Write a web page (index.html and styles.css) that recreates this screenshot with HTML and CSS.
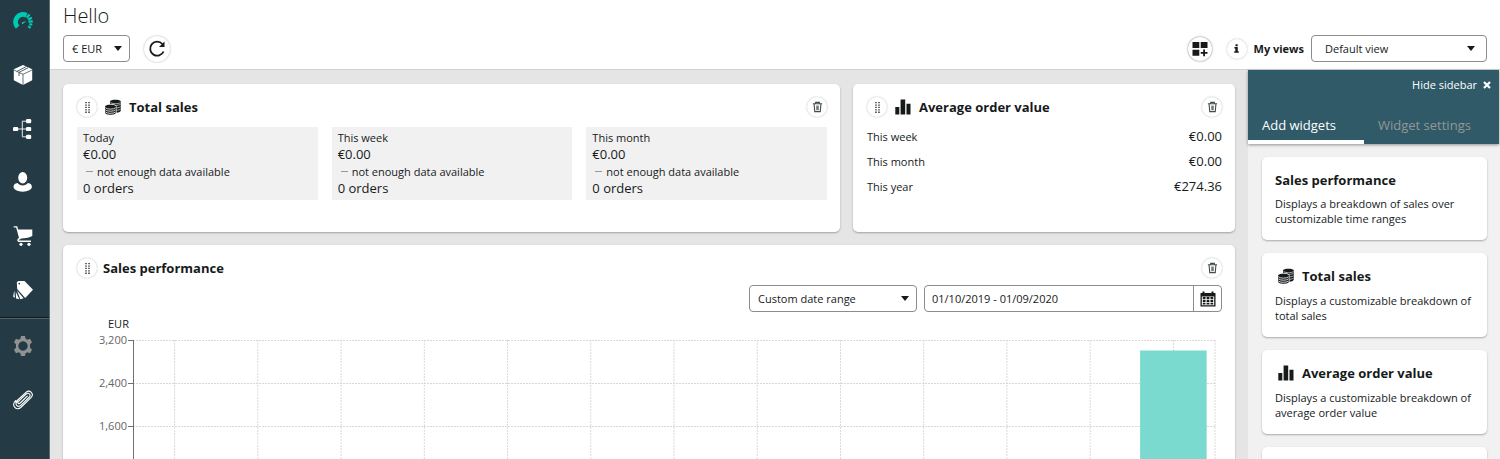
FILE: index.html
```html
<!DOCTYPE html>
<html lang="en">
<head>
<meta charset="utf-8">
<title>Dashboard</title>
<meta name="viewport" content="width=device-width, initial-scale=1">
<link rel="stylesheet" href="styles.css">
</head>
<body>
<svg class="symbols" aria-hidden="true">
  <symbol id="coins" viewBox="0 0 16 16">
    <path d="M5 2.600C5 0 15.800 0 15.800 2.600V11.500c0 1.200-1.800 2-4.300 2.200V7C10 5.200 7.500 5 5 5z"/>
    <path d="M5.500 3.600c2.500 1.500 7.800 1.500 10.200 0M10 6.500c2.500-.1 4.800-.6 5.700-1.300M11.500 8.900c2-.1 3.600-.6 4.200-1.300M11.500 11.300c2-.1 3.600-.6 4.200-1.300" fill="none" stroke="#fff" stroke-width=".6"/>
    <path d="M0 7.700C0 4.700 11 4.700 11 7.700V13.500c0 3-11 3-11 0z"/>
    <path d="M.2 8.700c2 1.900 8.600 1.900 10.600 0M.2 10.800c2 1.900 8.600 1.900 10.600 0M.2 12.900c2 1.900 8.600 1.900 10.600 0" fill="none" stroke="#fff" stroke-width=".8"/>
    <path d="M.3 6.700C2.500 4.600 8.500 4.600 10.700 6.600" fill="none" stroke="#fff" stroke-width=".5"/>
  </symbol>
  <symbol id="bars" viewBox="0 0 16 16"><path d="M.3 8h4v7.500h-4zM5.600.5h4.600v15H5.600zM11.500 4.800h4v10.700h-4z"/></symbol>
  <symbol id="trash" viewBox="0 0 12 12">
    <path d="M1 2.500h10M4 2V1h4v1M2.300 3l.7 8h6l.7-8" fill="none" stroke="currentColor" stroke-width="1.200"/>
    <path d="M4.600 4.500h2.800v5H4.600z" opacity=".75"/>
  </symbol>
  <symbol id="grip" viewBox="0 0 5 11">
    <path d="M1 0v11M4 0v11" fill="none" stroke="currentColor" stroke-width="1.300" stroke-dasharray="1.300 1.100"/>
  </symbol>
</svg>
<div class="app">
  <nav class="rail" aria-label="Main">
    <div class="rail-main">
      <a href="#" aria-label="Dashboard" class="active"><svg viewBox="0 0 20 20">
        <path d="M4.700 16.200A7.500 7.500 0 0 1 13.500 4.300" fill="none" stroke="currentColor" stroke-width="4.800"/>
        <path d="M13.700 6.800l2.900-3.200M15 8.600l3.900-1.800M15.500 10.600l4.300-.2M16.400 13l2.900.8M15.300 15.200l2.300 1.800" fill="none" stroke="currentColor" stroke-width="2.200"/>
        <path d="M9 11.200l4.500-1.200-3.600 2.900a1 1 0 0 1-.9-1.700z"/>
      </svg></a>
      <a href="#" aria-label="Products"><svg viewBox="0 0 20 20">
        <path d="M10 0l9.200 4.200v11L10 20l-9.200-4.800v-11z"/>
        <path d="M.5 4.800L10 9.300l9.500-4.500M10 9.300V20" fill="none" stroke="#243b45" stroke-width=".7"/>
        <path d="M3.800 6.500l9.500-5M6 7.600V11M6 7.400l9-4.600" fill="none" stroke="#243b45" stroke-width=".8"/>
      </svg></a>
      <a href="#" aria-label="Categories"><svg viewBox="0 0 20 20">
        <path d="M2 10h12M13 2.200H9.300v15.600H14" fill="none" stroke="currentColor" stroke-width=".9"/>
        <rect x="0" y="7.900" width="5.200" height="4.200" rx="1.200"/><rect x="13" y="0" width="5.200" height="4.200" rx="1.200"/><rect x="13" y="7.900" width="5.200" height="4.200" rx="1.200"/><rect x="13" y="15.800" width="5.200" height="4.200" rx="1.200"/>
      </svg></a>
      <a href="#" aria-label="Customers"><svg viewBox="0 0 20 20">
        <ellipse cx="9.700" cy="5.700" rx="4.500" ry="5.700"/>
        <path d="M4.500 11C6.800 14.300 12.600 14.300 14.900 11c2.800.5 4 1.800 4 3.800 0 2.800-4.200 4.900-9.200 4.900S.5 17.600.5 14.800c0-2 1.200-3.300 4-3.800z"/>
      </svg></a>
      <a href="#" aria-label="Orders"><svg viewBox="0 0 20 20">
        <path d="M.7.900h3l3.200 11.600c-2.500.6-2.500 2.800-.5 2.800H18" fill="none" stroke="currentColor" stroke-width="1.400"/>
        <path d="M4.600 3.500h14.700v6.200c-1.200 1.700-7 2.500-12.400 2.900z"/>
        <circle cx="8" cy="18.300" r="1.600"/><circle cx="16" cy="18.300" r="1.600"/>
      </svg></a>
      <a href="#" aria-label="Marketing"><svg viewBox="0 0 20 20">
        <path fill-rule="evenodd" d="M3.800 2.300L5.300 1H11.500L20 9.800 12.200 18 4.200 9zM6.200 2.700a.8.800 0 1 0 .1 0z"/>
        <path d="M4 10.500l6.600 7.700-3.300 1zM2.800 11.800l3.500 7.500-3.300-.8zM1.300 10.500l.6 7.500L.1 16.500z"/>
      </svg></a>
    </div>
    <div class="rail-extra">
      <a href="#" aria-label="Settings" class="muted"><svg viewBox="0 0 20 20">
        <path fill-rule="evenodd" d="M8 0h4l.6 2.800 1.700 1 2.700-1 2 3.500L17 8.200v3.600l2 1.900-2 3.500-2.700-1-1.700 1L12 20H8l-.6-2.800-1.700-1-2.700 1-2-3.500 2-1.900V8.200L1 6.300l2-3.500 2.700 1 1.700-1zM10 5.300a4.700 4.700 0 1 0 .01 0z"/>
      </svg></a>
      <a href="#" aria-label="Attachments"><svg viewBox="0 0 20 20">
        <path d="M14.300 6.200L7.200 13c-1.500 1.500-3.300-.3-1.800-1.700L13.200 4c2.200-2 5.300.8 3.200 3L8.100 15.200c-3.100 3-7-.8-4-3.800M2.600 10.600C-2 15 3 21.500 7.800 17.500L18 7.700c3.600-3.800-1.200-8.700-5-5.400L2.600 12" fill="none" stroke="currentColor" stroke-width="1.100" stroke-linecap="round"/>
      </svg></a>
    </div>
  </nav>

  <div class="page">
    <header class="top">
      <h1>Hello</h1>
      <div class="toolbar">
        <span class="select currency"><select aria-label="Currency"><option>€ EUR</option></select></span>
        <button class="round refresh" aria-label="Refresh"><svg viewBox="0 0 18 18"><path d="M14.400 4A7 7 0 1 0 15.600 11.500" fill="none" stroke="currentColor" stroke-width="1.800"/><path d="M16.500 1.500v5.500h-5.500z"/></svg></button>
        <div class="views">
          <button class="round grid-button" aria-label="Edit widgets"><svg viewBox="0 0 16 16"><path d="M.5 1h6.800v6H.5zM8.700 1h6.800v6H8.700zM.5 8.700h6.800v6H.5zM11.200 8.500h1.800v2.400h2.500v1.800H13v2.500h-1.800v-2.500H8.700v-1.800h2.500z"/></svg></button>
          <button class="round info" aria-label="Information"><svg viewBox="0 0 6 10"><path d="M1.800 0h2.600v2.200H1.800zM.5 3.300h4v5h1.200V10H.3V8.300h1.300V5H.5z"/></svg></button>
          <label for="view">My views</label>
          <span class="select view"><select id="view"><option>Default view</option></select></span>
        </div>
      </div>
    </header>

    <div class="body">
      <main class="board">
        <section class="card total">
          <div class="card-head">
            <button class="round small" aria-label="Move"><svg class="grip"><use href="#grip"/></svg></button>
            <svg class="icon"><use href="#coins"/></svg>
            <h2>Total sales</h2>
            <button class="round small remove" aria-label="Delete"><svg class="trash"><use href="#trash"/></svg></button>
          </div>
          <div class="tiles">
            <div class="tile"><span>Today</span><strong>€0.00</strong><span class="note">not enough data available</span><strong>0 orders</strong></div>
            <div class="tile"><span>This week</span><strong>€0.00</strong><span class="note">not enough data available</span><strong>0 orders</strong></div>
            <div class="tile"><span>This month</span><strong>€0.00</strong><span class="note">not enough data available</span><strong>0 orders</strong></div>
          </div>
        </section>

        <section class="card average">
          <div class="card-head">
            <button class="round small" aria-label="Move"><svg class="grip"><use href="#grip"/></svg></button>
            <svg class="icon"><use href="#bars"/></svg>
            <h2>Average order value</h2>
            <button class="round small remove" aria-label="Delete"><svg class="trash"><use href="#trash"/></svg></button>
          </div>
          <dl class="values">
            <div><dt>This week</dt><dd>€0.00</dd></div>
            <div><dt>This month</dt><dd>€0.00</dd></div>
            <div><dt>This year</dt><dd>€274.36</dd></div>
          </dl>
        </section>

        <section class="card performance">
          <div class="card-head">
            <button class="round small" aria-label="Move"><svg class="grip"><use href="#grip"/></svg></button>
            <h2>Sales performance</h2>
            <button class="round small remove" aria-label="Delete"><svg class="trash"><use href="#trash"/></svg></button>
          </div>
          <div class="filters">
            <span class="select range"><select aria-label="Date range type"><option>Custom date range</option></select></span>
            <div class="date">
              <input type="text" aria-label="Date range" value="01/10/2019 - 01/09/2020">
              <button aria-label="Open calendar"><svg viewBox="0 0 16 16"><path fill-rule="evenodd" d="M.5 2h2V.5h2V2h7V.5h2V2h2v13.500H.5zM1.800 5.500v8.800h12.400V5.500z"/><path d="M2.800 6h2.700v2.200H2.800zM6.600 6h2.800v2.200H6.600zM10.500 6h2.700v2.200h-2.700zM2.800 9h2.700v2H2.800zM6.600 9h2.800v2H6.600zM10.500 9h2.700v2h-2.700zM2.800 11.800h2.700v1.800H2.800zM6.600 11.800h2.800v1.800H6.600zM10.500 11.800h2.700v1.800h-2.700z"/></svg></button>
            </div>
          </div>
          <div class="chart">
            <div class="unit">EUR</div>
            <div class="scale"><span>3,200</span><span>2,400</span><span>1,600</span></div>
            <svg class="plot" role="img" aria-label="Sales by month">
              <g class="rows">
                <line x1="0" x2="100%" y1="0.500" y2="0.500"/><line x1="0" x2="100%" y1="43.500" y2="43.500"/><line x1="0" x2="100%" y1="86.500" y2="86.500"/><line x1="0" x2="100%" y1="129.500" y2="129.500"/>
              </g>
              <g class="rows">
                <line x1="3.846%" x2="3.846%" y1="0" y2="172"/><line x1="11.538%" x2="11.538%" y1="0" y2="172"/><line x1="19.231%" x2="19.231%" y1="0" y2="172"/><line x1="26.923%" x2="26.923%" y1="0" y2="172"/><line x1="34.615%" x2="34.615%" y1="0" y2="172"/><line x1="42.308%" x2="42.308%" y1="0" y2="172"/><line x1="50%" x2="50%" y1="0" y2="172"/><line x1="57.692%" x2="57.692%" y1="0" y2="172"/><line x1="65.385%" x2="65.385%" y1="0" y2="172"/><line x1="73.077%" x2="73.077%" y1="0" y2="172"/><line x1="80.769%" x2="80.769%" y1="0" y2="172"/><line x1="88.462%" x2="88.462%" y1="0" y2="172"/><line x1="96.154%" x2="96.154%" y1="0" y2="172"/><line x1="100%" x2="100%" y1="0" y2="172"/>
              </g>
              <rect class="bar" x="93.077%" y="10.500" width="6.154%" height="161.500"/>
              <path class="axis" d="M.5 0v172M-5 .5H0M-5 43.500H0M-5 86.500H0M-5 129.500H0"/>
            </svg>
          </div>
        </section>
      </main>

      <aside class="side">
        <div class="side-head">
          <button class="hide">Hide sidebar <svg viewBox="0 0 8 8"><path d="M1 1l6 6M7 1L1 7" stroke="currentColor" stroke-width="2.200"/></svg></button>
          <div class="tabs" role="tablist">
            <button role="tab" aria-selected="true">Add widgets</button>
            <button role="tab" aria-selected="false">Widget settings</button>
          </div>
        </div>
        <div class="widgets">
          <article class="widget"><h3>Sales performance</h3><p>Displays a breakdown of sales over customizable time ranges</p></article>
          <article class="widget"><h3 class="with-icon"><svg class="icon"><use href="#coins"/></svg>Total sales</h3><p>Displays a customizable breakdown of total sales</p></article>
          <article class="widget"><h3 class="with-icon"><svg class="icon"><use href="#bars"/></svg>Average order value</h3><p>Displays a customizable breakdown of average order value</p></article>
          <article class="widget placeholder"></article>
        </div>
      </aside>
    </div>
  </div>
</div>
</body>
</html>
```
FILE: styles.css
```css
* { box-sizing: border-box; }
body {
  margin: 0;
  font: 11px/16px "Open Sans", "Noto Sans", sans-serif;
  color: #161a1b;
  background: #fff;
}
h1, h2, h3, p, dl, dd { margin: 0; }
button, input, select { font: inherit; color: inherit; }
button { padding: 0; border: 0; background: none; cursor: pointer; }
svg { display: block; fill: currentColor; }
.symbols { position: absolute; width: 0; height: 0; }

.app { display: flex; height: 100vh; overflow: hidden; }

.rail { flex: none; width: 50px; background: #243b45; border-right: 1px solid #5c6c73; }
.rail a { display: block; color: #fff; }
.rail svg { width: 20px; height: 20px; }
.rail .active { color: #00c9b1; }
.rail .muted { color: #8f9290; }
.rail-main, .rail-extra { display: flex; flex-direction: column; padding-left: 13px; }
.rail-main { height: 318px; justify-content: space-between; padding-top: 11px; padding-bottom: 17px; border-bottom: 1px solid #10191d; }
.rail-extra { gap: 34px; padding-top: 17px; border-top: 1px solid #51646c; }

.page { flex: 1; min-width: 0; display: flex; flex-direction: column; }
.top { flex: none; height: 70px; padding: 4px 13px 0; border-bottom: 1px solid #d2d2d2; }
h1 { font-size: 20px; line-height: 24px; font-weight: 300; }
.toolbar { display: flex; align-items: center; gap: 14px; margin-top: 7px; }
.views { display: flex; align-items: center; margin-left: auto; gap: 7px; }
.views label { font-weight: 700; }

.select { position: relative; display: block; }
.select::after {
  content: "";
  position: absolute;
  right: 8px;
  top: 11px;
  border: 4px solid transparent;
  border-top: 5px solid #161a1b;
  border-bottom: 0;
  pointer-events: none;
}
.select select {
  display: block;
  width: 100%;
  height: 27px;
  padding: 0 8px;
  border: 1px solid #8c8c8c;
  border-radius: 4px;
  background: #fff;
  appearance: none;
}
.currency { width: 67px; }
.view { width: 176px; }
.view select { padding-left: 13px; }
.view::after { right: 12px; }
.range { width: 168px; }

.round {
  display: grid;
  place-items: center;
  flex: none;
  width: 26px;
  height: 26px;
  border-radius: 50%;
  background: #fff;
  box-shadow: 0 0 2px rgba(0, 0, 0, .35);
}
.small, .info { width: 20px; height: 20px; box-shadow: 0 0 2px rgba(0, 0, 0, .3); }
.refresh svg { width: 18px; height: 18px; }
.grid-button { width: 24px; height: 24px; margin-right: 8px; box-shadow: 0 0 2px rgba(0, 0, 0, .6); }
.grid-button svg { width: 16px; height: 16px; }
.info svg { width: 5px; height: 9px; }
.grip { width: 5px; height: 11px; }
.trash { width: 11px; height: 12px; color: #444b4c; }
.icon { flex: none; width: 16px; height: 16px; }

.body { flex: 1; min-height: 0; display: flex; }
.board {
  flex: 1;
  min-width: 0;
  display: grid;
  grid-template-columns: repeat(12, 1fr);
  grid-auto-rows: max-content;
  align-content: start;
  gap: 13px;
  padding: 14px 13px;
  background: #e5e5e5;
}
.card, .widget { background: #fff; border-radius: 5px; box-shadow: 0 1px 2px rgba(0, 0, 0, .3); }
.card { padding: 13px 13px 32px 14px; }
.total { grid-column: span 8; }
.average { grid-column: span 4; }
.performance { grid-column: span 12; }
.card-head { display: flex; align-items: center; gap: 8px; height: 20px; }
.performance .card-head { gap: 6px; }
h2, h3 { font-size: 13px; line-height: 20px; font-weight: 700; }
h2 { padding-bottom: 1px; }
.remove { margin-left: auto; }
.tiles { display: grid; grid-template-columns: repeat(3, 1fr); gap: 14px; margin-top: 10px; }
.tile { display: flex; flex-direction: column; padding: 2px 6px 3px; background: #f1f1f1; line-height: 17px; }
.tile strong { font-size: 13px; font-weight: 400; }
.note { display: flex; align-items: center; gap: 4px; padding-left: 3px; }
.note::before { content: ""; width: 7px; height: 1px; background: #999; }
.values { margin-top: 7px; }
.values div { display: flex; justify-content: space-between; line-height: 25px; }
.values dd { font-size: 13px; }

.filters { display: flex; justify-content: flex-end; gap: 7px; margin-top: 7px; }
.date { display: flex; width: 298px; height: 27px; border: 1px solid #8c8c8c; border-radius: 4px; }
.date input { flex: 1; min-width: 0; padding: 0 7px; border: 0; border-radius: 4px; background: none; }
.date button { display: grid; place-items: center; width: 28px; border-left: 1px solid #8c8c8c; }
.date svg { width: 16px; height: 16px; }

.chart { display: grid; grid-template-columns: 50px 1fr; column-gap: 6px; padding-right: 7px; margin-top: 3px; }
.unit { grid-column: 1 / -1; padding-left: 31px; line-height: 17px; }
.scale { color: #666; text-align: right; }
.scale span { display: block; height: 43px; }
.plot { width: 100%; height: 173px; margin-top: 8px; overflow: visible; }
.rows { stroke: #d9d9d9; stroke-dasharray: 2 1; }
.axis { fill: none; stroke: #707070; }
.bar { fill: #7adacf; }

.side { flex: none; width: 252px; padding-right: 1px; background: #f1f1f1; }
.side-head { display: flex; flex-direction: column; height: 74px; background: #305a67; color: #fff; box-shadow: 0 1px 3px rgba(0, 0, 0, .4); }
.hide { display: flex; align-items: center; align-self: flex-end; gap: 6px; padding: 7px 8px 0 0; }
.hide svg { width: 8px; height: 8px; }
.tabs { display: flex; margin-top: auto; }
.tabs button { padding: 0 14px; height: 34px; border-bottom: 4px solid transparent; font-size: 13px; text-align: left; color: #939797; }
.tabs [aria-selected="true"] { width: 116px; border-color: #fff; color: #fff; }
.widgets { display: flex; flex-direction: column; gap: 13px; padding: 13px 12px 0 14px; }
.widget { padding: 13px 13px 14px; }
.widget p { margin-top: 6px; line-height: 15px; }
.with-icon { display: flex; align-items: center; gap: 8px; padding-left: 3px; }
.with-icon + p { margin-top: 7px; }
.placeholder { min-height: 84px; }
```
